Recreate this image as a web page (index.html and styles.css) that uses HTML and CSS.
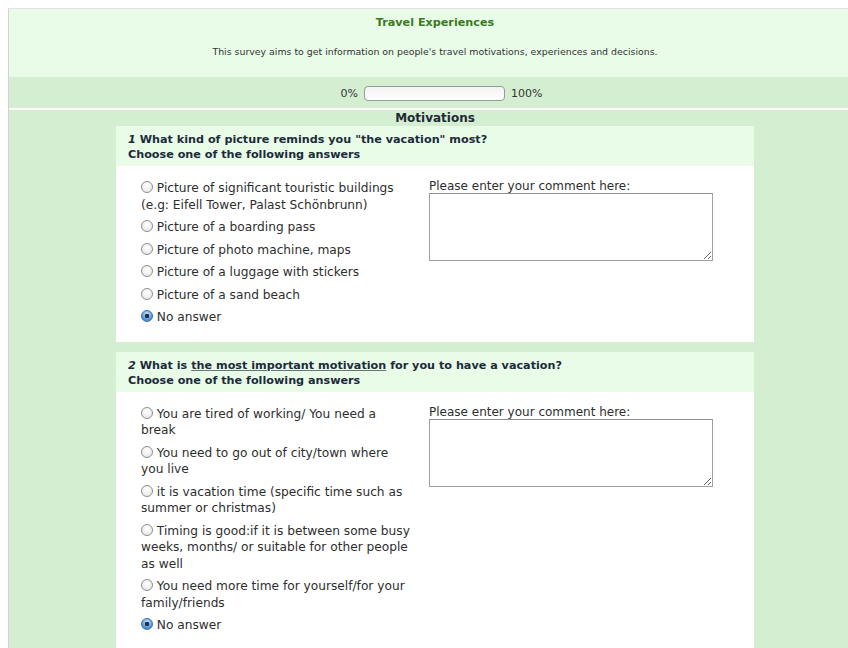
FILE: index.html
```html
<!DOCTYPE html>
<html lang="en">
<head>
<meta charset="utf-8">
<title>Travel Experiences</title>
<link rel="stylesheet" href="styles.css">
</head>
<body>
<div class="survey">
  <div class="survey-header">
    <div class="survey-title">Travel Experiences</div>
    <div class="survey-desc">This survey aims to get information on people's travel motivations, experiences and decisions.</div>
  </div>
  <div class="progress-row">
    <span>0%</span>
    <span class="progress-bar"></span>
    <span>100%</span>
  </div>
  <div class="group">
    <div class="group-title">Motivations</div>

    <div class="question">
      <div class="question-head">
        <div><em class="qnum">1</em> What kind of picture reminds you "the vacation" most?</div>
        <div>Choose one of the following answers</div>
      </div>
      <div class="question-body">
        <ul class="answers">
          <li><label><input type="radio" name="q1"> Picture of significant touristic buildings (e.g: Eifell Tower, Palast Schönbrunn)</label></li>
          <li><label><input type="radio" name="q1"> Picture of a boarding pass</label></li>
          <li><label><input type="radio" name="q1"> Picture of photo machine, maps</label></li>
          <li><label><input type="radio" name="q1"> Picture of a luggage with stickers</label></li>
          <li><label><input type="radio" name="q1"> Picture of a sand beach</label></li>
          <li><label><input type="radio" name="q1" checked> No answer</label></li>
        </ul>
        <div class="comment">
          <label class="comment-label">Please enter your comment here:</label>
          <textarea class="comment-box"></textarea>
        </div>
      </div>
    </div>

    <div class="question">
      <div class="question-head">
        <div><span class="qnum">2</span> What is <u>the most important motivation</u> for you to have a vacation?</div>
        <div>Choose one of the following answers</div>
      </div>
      <div class="question-body">
        <ul class="answers">
          <li><label><input type="radio" name="q2"> You are tired of working/ You need a break</label></li>
          <li><label><input type="radio" name="q2"> You need to go out of city/town where you live</label></li>
          <li><label><input type="radio" name="q2"> it is vacation time (specific time such as summer or christmas)</label></li>
          <li><label><input type="radio" name="q2"> Timing is good:if it is between some busy weeks, months/ or suitable for other people as well</label></li>
          <li><label><input type="radio" name="q2"> You need more time for yourself/for your family/friends</label></li>
          <li><label><input type="radio" name="q2" checked> No answer</label></li>
        </ul>
        <div class="comment">
          <label class="comment-label">Please enter your comment here:</label>
          <textarea class="comment-box"></textarea>
        </div>
      </div>
    </div>
  </div>
</div>
</body>
</html>
```

FILE: styles.css
```css
html {
  overflow: hidden;
  background: #fff;
}

body {
  margin: 0;
  padding: 8px 0 0 8px;
  font-family: "DejaVu Sans", Verdana, sans-serif;
  color: #2b2b2b;
}

.survey {
  width: 852px;
  border-left: 1px solid #cfd3d6;
  border-top: 1px solid #dfe3e5;
}

/* header */
.survey-header {
  background: #e9fce8;
  height: 68px;
  text-align: center;
  box-sizing: border-box;
  padding-top: 6px;
}

.survey-title {
  font-size: 11.2px;
  font-weight: bold;
  color: #3c7a22;
  line-height: 16px;
}

.survey-desc {
  font-size: 9.4px;
  color: #333;
  margin-top: 15px;
  line-height: 12px;
}

/* progress */
.progress-row {
  background: #d3eed1;
  height: 33px;
  box-sizing: border-box;
  padding: 2px 0 0 13px;
  border-bottom: 2px solid #fff;
  display: flex;
  justify-content: center;
  align-items: center;
  gap: 6px;
  font-size: 11px;
  color: #333;
}

.progress-bar {
  width: 139px;
  height: 13px;
  border: 1px solid #9a9a9a;
  border-radius: 4px;
  background: linear-gradient(#f2f2f2, #fff);
}

/* group */
.group {
  background: #d3eed1;
  padding-bottom: 20px;
}

.group-title {
  text-align: center;
  font-weight: bold;
  font-size: 12px;
  line-height: 16px;
  color: #1e2a36;
}

.question {
  margin: 0 107px 10px 107px;
}

.question-head {
  background: #e9fce8;
  padding: 6px 12px 4px 12px;
  font-weight: bold;
  font-size: 11.2px;
  line-height: 15px;
  color: #1b2b3b;
}

.qnum {
  font-style: italic;
}

.question-head u {
  text-decoration-color: #6a7480;
}

.question-body {
  background: #fff;
  display: flex;
  padding: 14px 0 16px 25px;
}

.answers {
  list-style: none;
  margin: 0;
  padding: 0;
  width: 272px;
  font-size: 12.2px;
  line-height: 16.5px;
  color: #2e2e2e;
}

.answers li {
  margin-bottom: 6px;
}

.answers li:last-child {
  margin-bottom: 0;
}

.answers input {
  appearance: none;
  -webkit-appearance: none;
  width: 12px;
  height: 12px;
  margin: 0;
  vertical-align: -1px;
  border-radius: 50%;
  border: 1px solid #8d8d8d;
  background: radial-gradient(circle at 50% 35%, #ffffff, #e4e4e4);
  box-sizing: border-box;
}

.answers input:checked {
  border-color: #3f6fa8;
  background: radial-gradient(circle, #1f2f44 0 2px, transparent 2.5px),
    radial-gradient(circle at 50% 30%, #bfe0ff, #4e91d6 70%);
}

.comment {
  margin-left: 16px;
  display: flex;
  flex-direction: column;
}

.comment-label {
  font-size: 12px;
  line-height: 13px;
  color: #2e2e2e;
}

.comment-box {
  width: 284px;
  height: 68px;
  box-sizing: border-box;
  border: 1px solid #a0a0a0;
  border-top-color: #8e8e8e;
  margin: 0;
  padding: 2px;
}
```
